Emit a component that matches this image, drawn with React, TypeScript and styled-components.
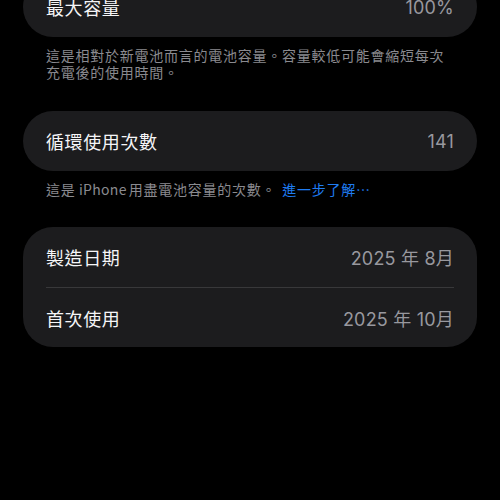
import React from "react";
import styled, { createGlobalStyle } from "styled-components";

const Global = createGlobalStyle`
  html, body { margin: 0; padding: 0; background: #000; }
  body { font-family: "Noto Sans CJK TC", "Noto Sans", sans-serif; -webkit-font-smoothing: antialiased; }
`;

const Page = styled.div`
  width: 500px;
  height: 500px;
  overflow: hidden;
  background: #000;
  box-sizing: border-box;
  padding: 0 23px;
`;

const Stack = styled.div`
  margin-top: -23px;
  display: flex;
  flex-direction: column;
`;

const Card = styled.div<{ $mt?: number }>`
  background: #1c1c1e;
  border-radius: 30px;
  padding: 0 23px;
  margin-top: ${(p) => p.$mt ?? 0}px;
`;

const Row = styled.div<{ $divider?: boolean }>`
  height: 60px;
  display: flex;
  align-items: center;
  justify-content: space-between;
  border-top: ${(p) => (p.$divider ? "1px solid #38383a" : "none")};
  box-sizing: border-box;
`;

const Label = styled.span`
  color: #f5f5f7;
  font-size: 18px;
  font-weight: 400;
  letter-spacing: 0.6px;
`;

const Value = styled.span`
  color: #98989e;
  font-family: "Inter", "Noto Sans CJK TC", sans-serif;
  font-size: 18px;
  letter-spacing: 0.2px;
`;

const Caption = styled.p`
  margin: 0;
  padding: 10px 23px 0;
  color: #8a8a8f;
  font-size: 14px;
  font-weight: 400;
  line-height: 17px;
  letter-spacing: 0.75px;
`;

const Brand = styled.span`
  letter-spacing: 0.3px;
  margin-right: 2px;
`;

const Link = styled.span`
  color: #1f7cf2;
  margin-left: 6px;
`;

export default function App() {
  return (
    <Page>
      <Global />
      <Stack>
        <Card>
          <Row>
            <Label>最大容量</Label>
            <Value>100%</Value>
          </Row>
        </Card>
        <Caption>這是相對於新電池而言的電池容量。容量較低可能會縮短每次充電後的使用時間。</Caption>
        <Card $mt={30}>
          <Row>
            <Label>循環使用次數</Label>
            <Value>141</Value>
          </Row>
        </Card>
        <Caption>
          這是<Brand> iPhone</Brand>用盡電池容量的次數。<Link>進一步了解⋯</Link>
        </Caption>
        <Card $mt={29}>
          <Row>
            <Label>製造日期</Label>
            <Value>2025 年 8月</Value>
          </Row>
          <Row $divider>
            <Label>首次使用</Label>
            <Value>2025 年 10月</Value>
          </Row>
        </Card>
      </Stack>
    </Page>
  );
}
